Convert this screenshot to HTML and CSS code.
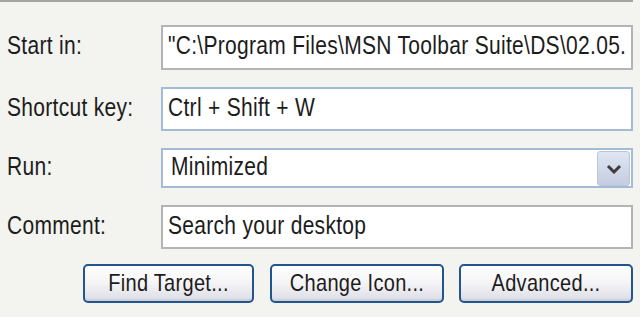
FILE: index.html
```html
<!DOCTYPE html>
<html>
<head>
<meta charset="utf-8">
<title>Shortcut</title>
<link rel="stylesheet" href="styles.css">
</head>
<body>

<div class="rule"></div>

<div class="form">
    <label class="lbl"><span class="tx">Start in:</span></label>
    <div class="box gray"><span class="tx">"C:\Program Files\MSN Toolbar Suite\DS\02.05.</span></div>

    <label class="lbl"><span class="tx">Shortcut key:</span></label>
    <div class="box blue"><span class="tx">Ctrl + Shift + W</span></div>

    <label class="lbl"><span class="tx">Run:</span></label>
    <div class="box blue select">
        <span class="tx run">Minimized</span>
        <i class="drop">
            <svg width="16" height="10" viewBox="0 0 16 10"><polyline points="2,2 8,8 14,2" fill="none" stroke="#3c3c3c" stroke-width="3"/></svg>
        </i>
    </div>

    <label class="lbl"><span class="tx">Comment:</span></label>
    <div class="box gray"><span class="tx">Search your desktop</span></div>
</div>

<div class="buttons">
    <button class="btn w1"><span class="tx">Find Target...</span></button>
    <button class="btn w2"><span class="tx">Change Icon...</span></button>
    <button class="btn w2"><span class="tx">Advanced...</span></button>
</div>

</body>
</html>
```

FILE: styles.css
```css
*{ margin:0; padding:0; box-sizing:border-box;}
body{ background:#f3f3ef; font-family:"Liberation Sans", Arial, sans-serif; font-size:21px; letter-spacing:0.3px; color:#1c1c1c; width:640px; height:317px; overflow:hidden;}

.rule{ width:633px; height:2px; background:#a4a4a4;}

.tx{ display:inline-block; transform:scaleY(1.2); white-space:nowrap;}

.form{ display:grid; grid-template-columns:161px 472px; grid-template-rows:45px 44px 40px 44px; row-gap:17px; margin-top:23px;}
.lbl{ display:flex; align-items:center; padding:0 0 3px 7px;}
.box{ display:flex; align-items:center; background:#fff; border:2px solid #b3b3b3; padding:0 0 3px 5px; overflow:hidden;}
.box.blue{ border-color:#a3bbd6;}
.box.gray{ border-color:#b4b4b4;}
.select{ position:relative; padding-left:8px;}
.drop{ position:absolute; right:1px; top:1px; width:33px; height:35px; border:1px solid #b9c5da; border-radius:3px; background:linear-gradient(#dfe5f1, #c5cde0); display:flex; align-items:center; justify-content:center;}

.buttons{ display:flex; justify-content:flex-end; gap:15px; width:633px; margin-top:15px;}
.btn{ height:39px; border:2px solid #20558f; border-radius:5px; background:linear-gradient(#ffffff 0%, #f4f4f6 50%, #dcdce6 100%); font-family:inherit; font-size:20px; letter-spacing:0.3px; color:#1c1c1c; box-shadow:inset 0 -2px 0 #d0d0dc;}
.w1{ width:171px; margin-right:1px;}
.w2{ width:174px;}
```
